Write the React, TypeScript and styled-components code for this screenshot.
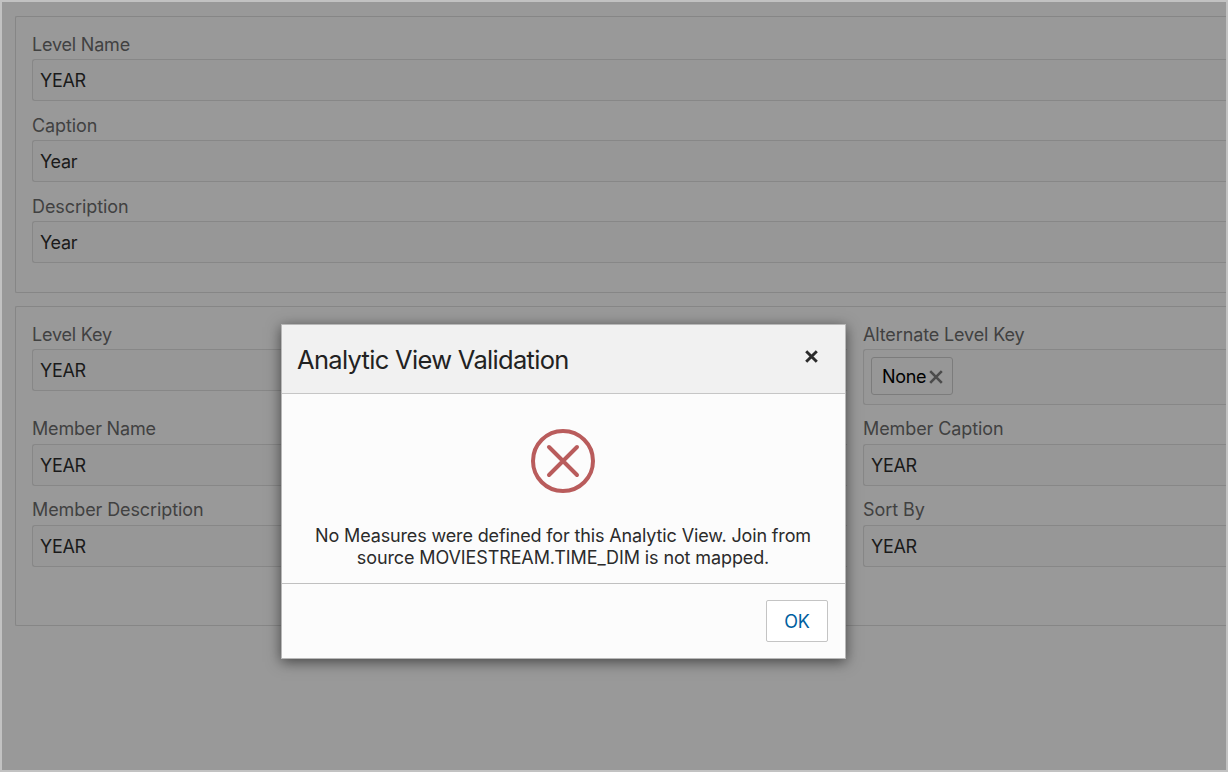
import React from 'react';
import styled, { createGlobalStyle } from 'styled-components';

const GlobalStyle = createGlobalStyle`
  *, *::before, *::after { box-sizing: border-box; }
  body {
    margin: 0;
    background: #999;
    font-family: Inter, "Liberation Sans", sans-serif;
    font-size: 18px;
    line-height: 22px;
  }
`;

const Page = styled.div`
  height: 772px;
  width: 1228px;
  overflow: hidden;
  border: 2px solid #c2c2c2;
  background: #999;
  padding: 14px 0 0 13px;
  display: flex;
  flex-direction: column;
  gap: 13px;
  position: relative;
`;

const Panel = styled.section<{ $height: number }>`
  flex: none;
  height: ${(p) => p.$height}px;
  border: 1px solid #868686;
  border-right: 0;
  border-radius: 2px 0 0 2px;
  padding: 16px 0 0 16px;
`;

const Stack = styled.div`
  display: flex;
  flex-direction: column;
  gap: 13px;
`;

const Columns = styled.div`
  display: grid;
  grid-template-columns: 815px 1fr;
  column-gap: 16px;
  row-gap: 13px;
`;

const FieldBox = styled.div`
  display: flex;
  flex-direction: column;
`;

const Text = styled.span<{ $spacing?: number }>`
  letter-spacing: ${(p) => p.$spacing ?? 0}px;
  white-space: nowrap;
`;

const Label = styled.label<{ $tight?: boolean }>`
  height: 26px;
  padding-top: ${(p) => (p.$tight ? 0 : 1)}px;
  color: #414141;
`;

const Control = styled.div<{ $height?: number }>`
  height: ${(p) => p.$height ?? 42}px;
  border: 1px solid #878787;
  border-right: 0;
  border-radius: 3px 0 0 3px;
  background: #979797;
  color: #1a1a1a;
  padding-left: 7px;
  display: flex;
  align-items: center;
`;

const Value = styled(Text)`
  padding-top: 2px;
`;

const Chip = styled.span`
  height: 38px;
  width: 82px;
  margin-bottom: 2px;
  border: 1px solid #7c7c7c;
  border-radius: 3px;
  padding: 1px 0 0 10px;
  display: flex;
  align-items: center;
  gap: 3px;
  color: #000;
`;

const Dialog = styled.div`
  position: absolute;
  left: 279px;
  top: 322px;
  width: 565px;
  height: 335px;
  border: 1px solid #b8b8b8;
  background: #fcfcfc;
  box-shadow: 0 3px 13px rgba(0, 0, 0, 0.55);
  display: flex;
  flex-direction: column;
  color: #2b2b2b;
`;

const DialogHeader = styled.header`
  height: 69px;
  flex: none;
  background: #f1f1f1;
  border-bottom: 1px solid #c6c6c6;
  padding: 0 27px 0 15px;
  display: flex;
  align-items: center;
  justify-content: space-between;
`;

const Title = styled.h1`
  margin: 2px 0 0;
  font-size: 25.5px;
  line-height: 32px;
  font-weight: 400;
  color: #222;
`;

const CloseButton = styled.button`
  border: 0;
  padding: 0;
  margin-bottom: 5px;
  background: none;
  display: flex;
`;

const DialogBody = styled.div`
  height: 190px;
  flex: none;
  border-bottom: 1px solid #c0c0c0;
  padding: 34px 1px 0 0;
  display: flex;
  flex-direction: column;
  align-items: center;
  gap: 31px;
`;

const Message = styled.p`
  margin: 0;
  display: flex;
  flex-direction: column;
  align-items: center;
`;

const DialogFooter = styled.footer`
  flex: 1;
  display: flex;
  justify-content: flex-end;
  align-items: flex-start;
  padding: 16px 17px 0;
`;

const OkButton = styled.button`
  width: 62px;
  height: 42px;
  border: 1px solid #c4c4c4;
  border-radius: 2px;
  background: #fff;
  color: #00609f;
  font: inherit;
  padding: 2px 0 0;
`;

type FieldProps = { label: string; spacing: number; value?: string; chip?: boolean; tight?: boolean };

function Field({ label, spacing, value = 'YEAR', chip, tight }: FieldProps) {
  return (
    <FieldBox>
      <Label $tight={tight}><Text $spacing={spacing}>{label}</Text></Label>
      <Control $height={chip ? 56 : 42}>
        {chip ? (
          <Chip>
            <Text $spacing={-0.3}>None</Text>
            <svg width="14" height="14" viewBox="0 0 14 14" fill="none" stroke="#4b4b4b" strokeWidth="2.6">
              <path d="M1.2 1.2L12.8 12.8M12.8 1.2L1.2 12.8" />
            </svg>
          </Chip>
        ) : (
          <Value $spacing={-0.3}>{value}</Value>
        )}
      </Control>
    </FieldBox>
  );
}

export default function App() {
  return (
    <>
      <GlobalStyle />
      <Page>
        <Panel $height={277}>
          <Stack>
            <Field label="Level Name" spacing={-0.2} />
            <Field label="Caption" spacing={-0.1} value="Year" />
            <Field label="Description" spacing={-0.07} value="Year" />
          </Stack>
        </Panel>
        <Panel $height={320}>
          <Columns>
            <Field label="Level Key" spacing={-0.2} />
            <Field label="Alternate Level Key" spacing={-0.13} chip />
            <Field label="Member Name" spacing={-0.18} tight />
            <Field label="Member Caption" spacing={-0.1} tight />
            <Field label="Member Description" spacing={-0.1} tight />
            <Field label="Sort By" spacing={-0.05} tight />
          </Columns>
        </Panel>
        <Dialog role="dialog">
          <DialogHeader>
            <Title><Text $spacing={-0.69}>Analytic View Validation</Text></Title>
            <CloseButton aria-label="Close">
              <svg width="13" height="13" viewBox="0 0 13 13" fill="none" stroke="#2b2b2b" strokeWidth="2.9">
                <path d="M1.2 1.2L11.8 11.8M11.8 1.2L1.2 11.8" />
              </svg>
            </CloseButton>
          </DialogHeader>
          <DialogBody>
            <svg width="66" height="66" viewBox="0 0 66 66" fill="none" stroke="#b95c5c" strokeWidth="4">
              <circle cx="33" cy="33" r="30" />
              <path d="M19 19L47 47M47 19L19 47" strokeLinecap="round" />
            </svg>
            <Message>
              <Text $spacing={-0.14}>No Measures were defined for this Analytic View. Join from</Text>
              <Text $spacing={-0.11}>source MOVIESTREAM.TIME_DIM is not mapped.</Text>
            </Message>
          </DialogBody>
          <DialogFooter>
            <OkButton><Text $spacing={-0.2}>OK</Text></OkButton>
          </DialogFooter>
        </Dialog>
      </Page>
    </>
  );
}
